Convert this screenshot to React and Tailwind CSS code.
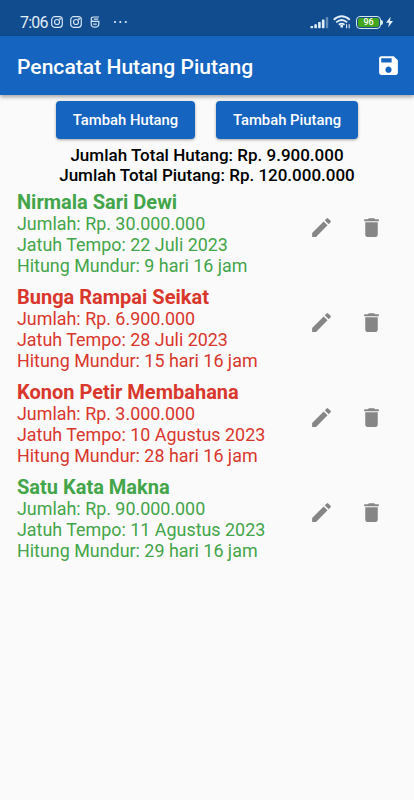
import React from "react";
import { MdSave, MdEdit, MdDelete } from "react-icons/md";

const entries = [
  { name: "Nirmala Sari Dewi", amount: "30.000.000", due: "22 Juli 2023", countdown: "9 hari 16 jam", type: "piutang" },
  { name: "Bunga Rampai Seikat", amount: "6.900.000", due: "28 Juli 2023", countdown: "15 hari 16 jam", type: "hutang" },
  { name: "Konon Petir Membahana", amount: "3.000.000", due: "10 Agustus 2023", countdown: "28 hari 16 jam", type: "hutang" },
  { name: "Satu Kata Makna", amount: "90.000.000", due: "11 Agustus 2023", countdown: "29 hari 16 jam", type: "piutang" },
];

function InstagramIcon() {
  return (
    <svg width="12" height="12" viewBox="0 0 12 12" fill="none" stroke="#d5e6f5" strokeWidth="1.2">
      <rect x="0.7" y="0.7" width="10.6" height="10.6" rx="3" />
      <circle cx="6" cy="6" r="2.5" />
      <circle cx="9" cy="3" r="0.4" />
    </svg>
  );
}

function StatusBar() {
  return (
    <div className="flex h-9 shrink-0 items-center justify-between bg-[#104c8e] pt-[8px] pr-[21px] pl-5 text-[#e2eef8]">
      <div className="flex items-center">
        <span className="w-[31px] pt-[2px] text-[16px] leading-4 tracking-[-0.8px]">7:06</span>
        <InstagramIcon />
        <span className="ml-[7px] flex">
          <InstagramIcon />
        </span>
        <svg className="ml-[8px]" width="10" height="12" viewBox="0 0 10 12" fill="none" stroke="#d5e6f5" strokeWidth="1.2">
          <path d="M9 1H3.6Q1.2 1 1.2 3.2T3.6 5.4H8.8V8Q8.8 11.2 5 11.2T1.2 8V5M3.8 3.1H8.2M3.2 8.2H6.8" />
        </svg>
        <svg className="ml-[13px]" width="15" height="4" viewBox="0 0 15 4" fill="#e2eef8">
          <circle cx="2" cy="2" r="1.1" />
          <circle cx="7.3" cy="2" r="1.1" />
          <circle cx="12.8" cy="2" r="1.1" />
        </svg>
      </div>
      <div className="flex items-center">
        <svg width="19" height="13" viewBox="0 0 19 13" fill="#e2eef8">
          <rect x="0.5" y="10" width="2.6" height="2.2" rx="0.6" />
          <rect x="4.3" y="8.3" width="2.6" height="3.9" rx="0.6" />
          <rect x="8.1" y="6" width="2.6" height="6.2" rx="0.6" />
          <rect x="11.9" y="3.5" width="2.6" height="8.7" rx="0.6" />
          <rect x="15.8" y="1" width="2.4" height="11.2" rx="0.6" opacity="0.4" />
        </svg>
        <svg className="ml-[4px]" width="18" height="14" viewBox="0 0 18 14" fill="none" stroke="#e2eef8" strokeWidth="1.8">
          <path d="M0.7 4.8Q8.7 -2.2 16.8 4.8" />
          <path d="M3.2 7.4Q8.7 2.6 14.2 7.4" />
          <path d="M5.8 9.8Q8.7 7.4 11.6 9.8" />
          <path d="M8.7 9.8V12.5" strokeWidth="2.6" />
          <path d="M13.6 13.2V9.2M16.2 9.2V13.2" strokeWidth="1.1" />
        </svg>
        <div className="ml-[5px] flex h-[13px] w-[25px] items-center justify-center rounded-[4px] border border-[#d7e8e8] p-px">
          <span className="flex h-full w-full items-center justify-center rounded-[2px] bg-[#43a51c] text-[9px] leading-none font-medium text-white">96</span>
        </div>
        <span className="h-[5px] w-[2px] rounded-r-sm bg-[#d7e8e8]" />
        <svg className="ml-[3px]" width="7" height="12" viewBox="0 0 7 12" fill="#e2eef8">
          <path d="M4.6 0.8 0 6.8H3L2.2 11.4 7 5H4Z" />
        </svg>
      </div>
    </div>
  );
}

function EntryRow({ entry }) {
  return (
    <li className="flex h-[95px] justify-between pr-[30px] pl-[17px]">
      <div className={entry.type === "hutang" ? "text-[#d9362c]" : "text-[#43a549]"}>
        <h2 className="text-[20px] leading-[22px] font-bold">{entry.name}</h2>
        <div className="text-[17.9px] leading-[21px]">
          <p>Jumlah: Rp. {entry.amount}</p>
          <p>Jatuh Tempo: {entry.due}</p>
          <p>Hitung Mundur: {entry.countdown}</p>
        </div>
      </div>
      <div className="flex gap-[25px] pt-[24px] text-[#868686]">
        <button className="h-[25px]" aria-label="Ubah">
          <MdEdit size={25} />
        </button>
        <button className="h-[25px]" aria-label="Hapus">
          <MdDelete size={25} />
        </button>
      </div>
    </li>
  );
}

export default function App() {
  return (
    <div className="flex h-[800px] w-full flex-col bg-[#fafafa] font-['Roboto',sans-serif]">
      <StatusBar />

      <header className="flex h-[59px] shrink-0 items-center justify-between bg-[#1564c0] pr-[13px] pl-[17px] text-white shadow-[0_2px_4px_rgba(0,0,0,0.35)]">
        <h1 className="pt-[2px] text-[21.1px] font-medium">Pencatat Hutang Piutang</h1>
        <button aria-label="Simpan">
          <MdSave size={25} />
        </button>
      </header>

      <div className="mt-[6px] flex justify-center gap-[21px]">
        <button className="h-[38px] w-[139px] rounded-[4px] bg-[#1564c0] pt-px text-[14.8px] font-medium text-white shadow-[0_1px_3px_rgba(0,0,0,0.35)]">
          Tambah Hutang
        </button>
        <button className="h-[38px] w-[142px] rounded-[4px] bg-[#1564c0] pt-px text-[14.8px] font-medium text-white shadow-[0_1px_3px_rgba(0,0,0,0.35)]">
          Tambah Piutang
        </button>
      </div>

      {/* Totals */}
      <div className="mt-[6px] text-center text-[17px] leading-5 font-medium text-black">
        <p>Jumlah Total Hutang: Rp. 9.900.000</p>
        <p>Jumlah Total Piutang: Rp. 120.000.000</p>
      </div>

      <ul className="mt-[6px]">
        {entries.map((entry) => (
          <EntryRow key={entry.name} entry={entry} />
        ))}
      </ul>
    </div>
  );
}
